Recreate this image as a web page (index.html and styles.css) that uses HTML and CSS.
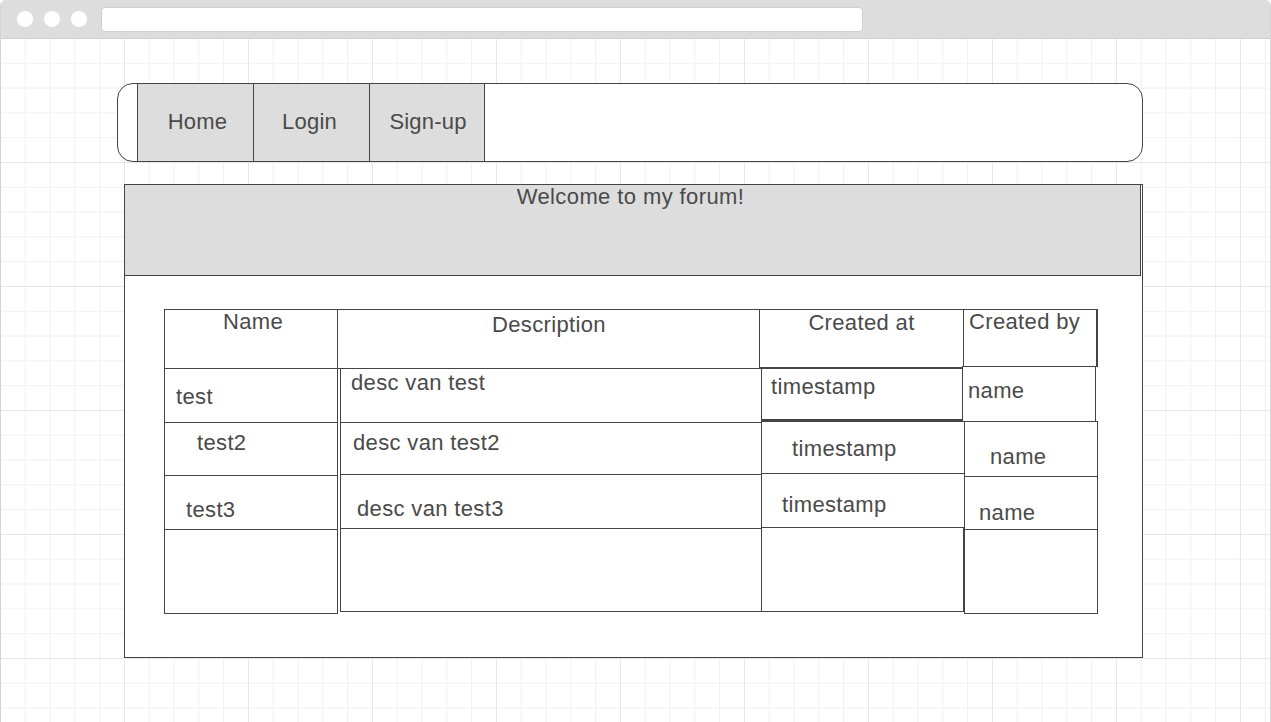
FILE: index.html
```html
<!DOCTYPE html>
<html>
<head>
<meta charset="utf-8">
<link rel="stylesheet" href="styles.css">
</head>
<body>
<div class="window">
  <div class="titlebar">
    <span class="dot"></span><span class="dot"></span><span class="dot"></span>
    <div class="url"></div>
  </div>
  <div class="canvas">
    <nav class="nav">
      <a class="nav-btn">Home</a>
      <a class="nav-btn">Login</a>
      <a class="nav-btn nav-btn-last">Sign-up</a>
    </nav>
    <section class="panel">
      <div class="panel-head">Welcome to my forum!</div>
      <div class="table">
        <div class="col col-name">
          <div class="cell h-name">Name</div>
          <div class="cell n1">test</div>
          <div class="cell n2">test2</div>
          <div class="cell n3">test3</div>
          <div class="cell n4"></div>
        </div>
        <div class="col col-desc">
          <div class="cell h-desc">Description</div>
          <div class="cell d1">desc van test</div>
          <div class="cell d2">desc van test2</div>
          <div class="cell d3">desc van test3</div>
          <div class="cell d4"></div>
        </div>
        <div class="col col-at">
          <div class="cell h-at">Created at</div>
          <div class="cell a1">timestamp</div>
          <div class="cell a2">timestamp</div>
          <div class="cell a3">timestamp</div>
          <div class="cell a4"></div>
        </div>
        <div class="col col-by">
          <div class="cell h-by">Created by</div>
          <div class="cell b1">name</div>
          <div class="cell b2">name</div>
          <div class="cell b3">name</div>
          <div class="cell b4"></div>
        </div>
      </div>
    </section>
  </div>
</div>
</body>
</html>
```

FILE: styles.css
```css
* { box-sizing: border-box; }
html, body { margin: 0; padding: 0; }
body {
  width: 1271px;
  height: 722px;
  overflow: hidden;
  background: #fff;
  font-family: "Liberation Sans", Arial, sans-serif;
  color: #4a4a4a;
}
.window {
  width: 1271px;
  height: 722px;
  display: flex;
  flex-direction: column;
  border-left: 1px solid #d4d4d4;
  border-right: 1px solid #d4d4d4;
  border-radius: 6px 6px 0 0;
  overflow: hidden;
}
.titlebar {
  height: 39px;
  flex: none;
  background: #dddddd;
  border-bottom: 1px solid #cfcfcf;
  display: flex;
  align-items: center;
  padding-left: 16px;
  gap: 11px;
}
.dot {
  width: 16px;
  height: 16px;
  border-radius: 50%;
  background: #fff;
  flex: none;
}
.url {
  margin-left: 3px;
  width: 762px;
  height: 25px;
  background: #fff;
  border: 1px solid #d0d0d0;
  border-radius: 4px;
  margin-top: 1px;
}
.canvas {
  flex: 1;
  padding: 44px 0 0 116px;
  background-color: #fff;
  background-image:
    linear-gradient(to right, #e6e6e6 1px, transparent 1px),
    linear-gradient(to bottom, #e6e6e6 1px, transparent 1px),
    linear-gradient(to right, #f1f1f1 1px, transparent 1px),
    linear-gradient(to bottom, #f1f1f1 1px, transparent 1px);
  background-size: 124px 124px, 124px 124px, 24.8px 24.8px, 24.8px 24.8px;
  background-position: -1px -1px, -1px -1px, -1px -1px, -1px -1px;
}
.nav {
  width: 1026px;
  height: 79px;
  border: 1px solid #444;
  border-radius: 16px;
  background: #fff;
  display: flex;
  padding-left: 19px;
}
.nav-btn {
  width: 116px;
  height: 100%;
  background: #dddddd;
  border-left: 1px solid #444;
  display: flex;
  align-items: center;
  justify-content: center;
  font-size: 22px;
  letter-spacing: 0.2px;
  padding-bottom: 2px;
  color: #4a4a4a;
}
.nav-btn:first-child { padding-left: 4px; }
.nav-btn:nth-child(2) { padding-right: 4px; }
.nav-btn-last {
  width: 116px;
  border-right: 1px solid #444;
  padding-left: 2px;
}
.panel {
  margin-top: 22px;
  margin-left: 7px;
  width: 1019px;
  height: 474px;
  border: 1px solid #444;
  background: #fff;
}
.panel-head {
  width: 1016px;
  height: 91px;
  background: #dddddd;
  border-right: 1px solid #444;
  border-bottom: 1px solid #444;
  text-align: center;
  font-size: 22px;
  letter-spacing: 0.4px;
  line-height: 24px;
  padding-right: 4px;
}
.table {
  display: flex;
  align-items: flex-start;
  margin: 33px 0 0 39px;
}
.col {
  display: flex;
  flex-direction: column;
  align-items: flex-start;
}
.cell {
  border: 1px solid #444;
  background: #fff;
  font-size: 22px;
  letter-spacing: 0.35px;
  line-height: 24px;
  white-space: nowrap;
  flex: none;
}
.cell + .cell { margin-top: -1px; }

/* Name column */
.col-name { width: 174px; }
.h-name { width: 174px; height: 60px; text-align: center; padding-left: 4px; }
.n1 { width: 174px; height: 55px; padding: 16px 0 0 11px; }
.n2 { width: 174px; height: 54px; padding: 8px 0 0 32px; }
.n3 { width: 174px; height: 55px; padding: 22px 0 0 21px; }
.n4 { width: 174px; height: 85px; }

/* Description column */
.col-desc { margin-left: -1px; }
.h-desc { width: 424px; height: 60px; text-align: center; padding-top: 3px; }
.d1, .d2, .d3, .d4 { width: 422px; margin-left: 3px; }
.d1 { height: 55px; padding: 2px 0 0 10px; }
.d2 { height: 53px; padding: 8px 0 0 12px; }
.d3 { height: 55px; padding: 22px 0 0 16px; }
.d4 { height: 84px; }

/* Created at column */
.col-at { margin-left: -3px; }
.h-at { width: 205px; height: 59px; text-align: center; padding-top: 1px; }
.cell.a1 { width: 202px; height: 53px; margin: 0 0 0 2px; padding: 6px 0 0 9px; border-bottom-width: 2px; }
.cell.a2 { width: 204px; height: 53px; margin: 0 0 0 2px; padding: 15px 0 0 30px; }
.a3 { width: 204px; height: 55px; margin-left: 2px; padding: 19px 0 0 20px; }
.a4 { width: 203px; height: 85px; margin-left: 2px; }

/* Created by column */
.col-by { margin-left: -2px; }
.h-by { width: 135px; height: 58px; padding-left: 5px; border-right-width: 2px; }
.b1 { width: 134px; height: 56px; margin-left: -1px; padding: 12px 0 0 5px; }
.b2 { width: 134px; height: 56px; margin-left: 1px; padding: 23px 0 0 25px; }
.b3 { width: 134px; height: 54px; margin-left: 1px; padding: 24px 0 0 14px; }
.b4 { width: 134px; height: 85px; margin-left: 1px; }
```
